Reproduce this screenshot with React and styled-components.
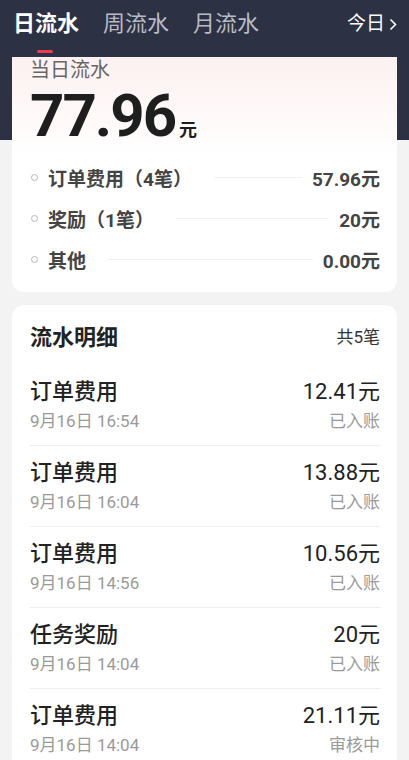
import React from 'react'
import styled, { createGlobalStyle } from 'styled-components'

const GlobalStyle = createGlobalStyle`
  html, body {
    margin: 0;
    padding: 0;
    background: #f3f3f3;
  }
  body {
    font-family: Roboto, "Noto Sans CJK SC", "Noto Sans", sans-serif;
    -webkit-font-smoothing: antialiased;
  }
`

const Page = styled.div`
  width: 409px;
  height: 760px;
  overflow: hidden;
  background: linear-gradient(#2c3144 0, #2c3144 140px, #f3f3f3 140px);
`

const TabBar = styled.div`
  display: flex;
  align-items: center;
  height: 48px;
  padding: 0 12px 0 13px;
  margin-bottom: 9px;
`

const Tabs = styled.div`
  display: flex;
  gap: 24px;
  flex: 1;
`

const Tab = styled.div`
  position: relative;
  font-size: 22px;
  line-height: 30px;
  font-weight: ${p => (p.active ? 700 : 400)};
  color: ${p => (p.active ? '#ffffff' : '#b9bbc4')};

  &::after {
    content: '';
    display: ${p => (p.active ? 'block' : 'none')};
    position: absolute;
    left: 24px;
    bottom: -14px;
    width: 16px;
    height: 3px;
    border-radius: 2px;
    background: #ec3a50;
  }
`

const DayPick = styled.div`
  display: flex;
  align-items: center;
  gap: 4px;
  color: #ffffff;
  font-size: 19px;
  line-height: 24px;
`

const Card = styled.div`
  margin: 0 12px;
  background: #ffffff;
  border-radius: 12px;
`

const SummaryCard = styled(Card)`
  border-radius: 0 0 12px 12px;
  padding: 0 17px 12px 18px;
  background: linear-gradient(#fcf1f0 0, #fffafa 70px, #ffffff 95px);
`

const SummaryLabel = styled.div`
  font-size: 20px;
  line-height: 26px;
  color: #666666;
`

const Total = styled.div`
  display: flex;
  align-items: baseline;
  margin-bottom: 8px;
  color: #1e1e1e;
`

const TotalNum = styled.span`
  font-family: Roboto, sans-serif;
  font-size: 60px;
  line-height: 66px;
  font-weight: 700;
  letter-spacing: -2px;
`

const Unit = styled.span`
  font-size: 18px;
  font-weight: 700;
  margin-left: 4px;
`

const SumRow = styled.div`
  display: flex;
  align-items: center;
  height: 41px;
  font-size: 19px;
  font-weight: 700;
  color: #444444;
`

const Dot = styled.span`
  flex: none;
  box-sizing: border-box;
  width: 7px;
  height: 7px;
  border: 1.5px solid #b8b8b8;
  border-radius: 50%;
  margin: 0 10px 0 1px;
`

const Leader = styled.span`
  flex: 1;
  height: 1px;
  background: #f0f0f0;
  margin: 0 10px 0 22px;
`

const DetailCard = styled(Card)`
  margin-top: 13px;
  padding: 15px 17px 0 18px;
`

const DetailHead = styled.div`
  display: flex;
  justify-content: space-between;
  align-items: center;
  height: 30px;
  margin-bottom: 27px;
`

const DetailTitle = styled.div`
  font-size: 22px;
  font-weight: 700;
  color: #222222;
`

const Count = styled.div`
  font-size: 17px;
  color: #333333;
`

const Item = styled.div`
  display: grid;
  grid-template-columns: 1fr auto;
  row-gap: 4px;
  padding: 12px 0 13px;
  border-bottom: 1px solid #eeeeee;

  &:first-child {
    padding-top: 0;
  }
`

const ItemTitle = styled.div`
  font-size: 22px;
  line-height: 29px;
  font-weight: 500;
  color: #222222;
`

const Amount = styled(ItemTitle)`
  font-weight: 400;
  text-align: right;
`

const Meta = styled.div`
  font-size: 17px;
  line-height: 22px;
  color: #9a9a9a;
  text-align: ${p => (p.right ? 'right' : 'left')};
`

const summary = [
  { label: '订单费用（4笔）', value: '57.96元' },
  { label: '奖励（1笔）', value: '20元' },
  { label: '其他', value: '0.00元' },
]

const items = [
  { title: '订单费用', time: '9月16日 16:54', amount: '12.41元', status: '已入账' },
  { title: '订单费用', time: '9月16日 16:04', amount: '13.88元', status: '已入账' },
  { title: '订单费用', time: '9月16日 14:56', amount: '10.56元', status: '已入账' },
  { title: '任务奖励', time: '9月16日 14:04', amount: '20元', status: '已入账' },
  { title: '订单费用', time: '9月16日 14:04', amount: '21.11元', status: '审核中' },
]

export default function App() {
  return (
    <Page>
      <GlobalStyle />
      <TabBar>
        <Tabs>
          <Tab active>日流水</Tab>
          <Tab>周流水</Tab>
          <Tab>月流水</Tab>
        </Tabs>
        <DayPick>
          今日
          <svg width="8" height="13" viewBox="0 0 8 13">
            <path d="M1.5 1.5 L6.5 6.5 L1.5 11.5" fill="none" stroke="#fff" strokeWidth="1.6" />
          </svg>
        </DayPick>
      </TabBar>

      <SummaryCard>
        <SummaryLabel>当日流水</SummaryLabel>
        <Total>
          <TotalNum>77.96</TotalNum>
          <Unit>元</Unit>
        </Total>
        {summary.map(row => (
          <SumRow key={row.label}>
            <Dot />
            <span>{row.label}</span>
            <Leader />
            <span>{row.value}</span>
          </SumRow>
        ))}
      </SummaryCard>

      <DetailCard>
        <DetailHead>
          <DetailTitle>流水明细</DetailTitle>
          <Count>共5笔</Count>
        </DetailHead>
        <div>
          {items.map((it, i) => (
            <Item key={i}>
              <ItemTitle>{it.title}</ItemTitle>
              <Amount>{it.amount}</Amount>
              <Meta>{it.time}</Meta>
              <Meta right>{it.status}</Meta>
            </Item>
          ))}
        </div>
      </DetailCard>
    </Page>
  )
}
